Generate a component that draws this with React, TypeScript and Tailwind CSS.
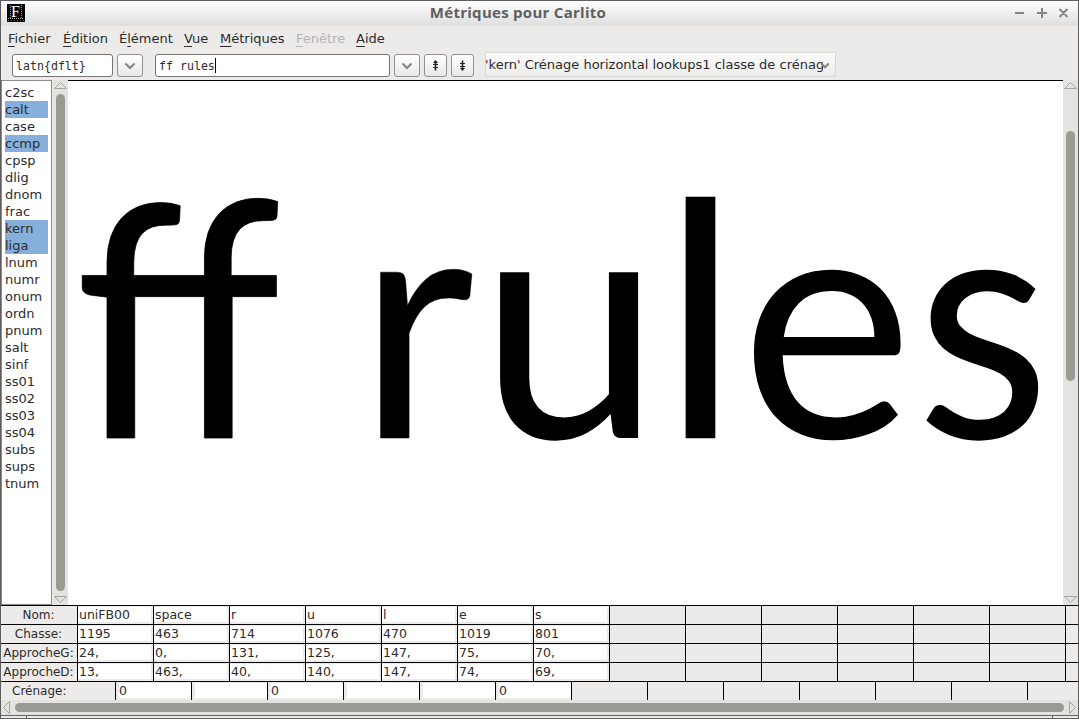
import React from "react";

const features = [
  "c2sc", "calt", "case", "ccmp", "cpsp", "dlig", "dnom", "frac", "kern", "liga", "lnum", "numr",
  "onum", "ordn", "pnum", "salt", "sinf", "ss01", "ss02", "ss03", "ss04", "subs", "sups", "tnum",
];
const selected = new Set(["calt", "ccmp", "kern", "liga"]);

const rows = [
  { label: "Nom:", values: ["uniFB00", "space", "r", "u", "l", "e", "s"] },
  { label: "Chasse:", values: ["1195", "463", "714", "1076", "470", "1019", "801"] },
  { label: "ApprocheG:", values: ["24,", "0,", "131,", "125,", "147,", "75,", "70,"] },
  { label: "ApprocheD:", values: ["13,", "463,", "40,", "140,", "147,", "74,", "69,"] },
];
const kerning = ["0", "", "0", "", "", "0"];

const menus = [
  { key: "F", rest: "ichier", width: "w-[55px]" },
  { key: "É", rest: "dition", width: "w-[56px]" },
  { pre: "É", key: "l", rest: "ément", width: "w-[65px]" },
  { key: "V", rest: "ue", width: "w-[36px]" },
  { key: "M", rest: "étriques", width: "w-[76px]" },
  { key: "F", rest: "enêtre", width: "w-[60px]", off: true },
  { key: "A", rest: "ide", width: "w-[40px]" },
];

const glyphs = [
  { text: "ff", box: "w-[203.4px] scale-x-[0.945] [-webkit-text-stroke:0.8px_black]" },
  { text: " ", box: "w-[79.4px]" },
  { text: "r", box: "w-[120.9px] scale-x-[0.976] [-webkit-text-stroke:0.5px_black]" },
  { text: "u", box: "w-[183.2px]" },
  { text: "l", box: "w-[78.5px] [-webkit-text-stroke:0.5px_black]" },
  { text: "e", box: "w-[175.3px]" },
  { text: "s", box: "w-[136px] scale-x-[0.947]" },
];

function Arrow({ dir }: { dir: "up" | "down" | "left" | "right" }) {
  const d = {
    up: "M1.5 8.5L7.5 2.5L13.5 8.5Z",
    down: "M1.5 1.5L7.5 7.5L13.5 1.5Z",
    left: "M8.5 1.5L2.5 7.5L8.5 13.5Z",
    right: "M1.5 1.5L7.5 7.5L1.5 13.5Z",
  }[dir];
  const vertical = dir === "up" || dir === "down";
  return (
    <svg width={vertical ? 15 : 10} height={vertical ? 10 : 15} className="block shrink-0" fill="none" stroke="#a5a6a0">
      <path d={d} />
    </svg>
  );
}

function Chevron({ small }: { small?: boolean }) {
  return (
    <svg width={small ? 10 : 12} height={small ? 7 : 8} viewBox="0 0 12 8" fill="none" stroke="#858680" strokeWidth={small ? 2.6 : 2}>
      <path d="M1.5 1.5L6 6L10.5 1.5" />
    </svg>
  );
}

function ToolButton({ children, className }: { children: React.ReactNode; className: string }) {
  return (
    <div className={`flex h-[23px] shrink-0 items-center justify-center rounded-[3px] border border-[#92938f] bg-gradient-to-b from-white to-[#e8e8e6] ${className}`}>
      {children}
    </div>
  );
}

function Step({ up }: { up?: boolean }) {
  return (
    <svg width="7" height="11" fill="none" stroke="#222" strokeWidth="1" className={up ? "" : "rotate-180"}>
      <path d="M3.5 1V10.5" strokeWidth="1.6" />
      <path d="M1 4.5H6M1 7.5H6" />
      <path d="M3.5 0L6 3H1Z" fill="#222" stroke="none" />
    </svg>
  );
}

export default function App() {
  return (
    <div className="flex h-[719px] w-[1079px] flex-col overflow-hidden border border-[#5f5e5f] bg-[#ecebe9] font-['DejaVu_Sans',sans-serif] text-[12.5px] text-[#2c2c2c]">
      <header className="flex h-[25px] shrink-0 items-center bg-gradient-to-b from-white to-[#dedede] pb-[2px] pl-[6px] pr-[7px]">
        <svg width="18" height="18" className="shrink-0">
          <rect width="18" height="18" fill="#000" />
          <path d="M3.5 1V14M14.5 1V14" stroke="#999" strokeDasharray="1 1" />
          <path d="M1 14.5H17" stroke="#aaa" strokeDasharray="1 1" />
          <path d="M1 16.5H17" stroke="#555" strokeDasharray="1 2" />
          <text x="4" y="12.5" fill="#fff" className="font-['Liberation_Serif',serif] text-[16px]">F</text>
        </svg>
        <h1 className="-ml-[4px] flex-1 text-center font-['Open_Sans',sans-serif] text-[15px] leading-[23px] font-bold tracking-[0.28px] text-[#606060]">
          Métriques pour Carlito
        </h1>
        <svg width="56" height="12" fill="none" stroke="#858585" strokeWidth="2">
          <path d="M0 6H9M22 6H32M27 1V11M44.5 2L52.5 10M52.5 2L44.5 10" />
        </svg>
      </header>

      <nav className="flex h-[25px] shrink-0 items-center pl-[7px] text-[13px] leading-[24px]">
        {menus.map((m, i) => (
          <span key={i} className={`shrink-0 whitespace-pre ${m.width} ${m.off ? "text-[#b5b4b2]" : ""}`}>
            {m.pre}
            <span className="underline decoration-1 underline-offset-[3px]">{m.key}</span>
            {m.rest}
          </span>
        ))}
      </nav>

      <div className="flex h-[29px] shrink-0 items-start pl-[11px]">
        <div className="mt-[3px] h-[23px] w-[101px] shrink-0 rounded-[3px] border border-[#747474] bg-white pl-[3px] font-['DejaVu_Sans_Mono',monospace] text-[11.6px] leading-[22px]">latn{"{dflt}"}</div>
        <ToolButton className="mt-[3px] ml-[4px] w-[26px]"><Chevron /></ToolButton>
        <div className="mt-[3px] ml-[12px] flex h-[23px] w-[235px] shrink-0 items-center rounded-[3px] border border-[#747474] bg-white pl-[3px] font-['DejaVu_Sans_Mono',monospace] text-[11.6px] leading-[21px]">
          <span className="pt-px">ff rules</span>
          <span className="h-[15px] w-px bg-black" />
        </div>
        <ToolButton className="mt-[3px] ml-[4px] w-[26px]"><Chevron /></ToolButton>
        <ToolButton className="mt-[3px] ml-[4px] w-[23px]"><Step up /></ToolButton>
        <ToolButton className="mt-[3px] ml-[4px] w-[23px]"><Step /></ToolButton>
        <div className="relative mt-px ml-[11px] h-[25px] w-[351px] shrink-0 border border-[#d9d9d7] bg-gradient-to-b from-[#fbfbfb] to-[#ececea]">
          <div className="-ml-px w-[338px] overflow-hidden text-[13px] leading-[23px] whitespace-pre">'kern' Crénage horizontal lookups1 classe de crénag</div>
          <div className="absolute top-[9px] right-[5px] flex"><Chevron small /></div>
        </div>
      </div>

      <main className="flex h-[525px] shrink-0">
        <div className="mr-px flex w-[51px] shrink-0 flex-col border border-[#8b8b8b] bg-white pt-[3px] pr-[3px] pl-[3px] text-[13px]">
          {features.map((f) => (
            <div key={f} className={`h-[17px] shrink-0 leading-[17px] ${selected.has(f) ? "bg-[#86afdc]" : ""}`}>{f}</div>
          ))}
        </div>
        <div className="flex w-[15px] shrink-0 flex-col items-center bg-[#e3e4e0]">
          <Arrow dir="up" />
          <div className="mt-[4px] mb-[4px] w-[9px] flex-1 rounded-full bg-[#999a94]" />
          <Arrow dir="down" />
        </div>
        <div className="flex h-[525px] w-[995px] shrink-0 overflow-hidden border-t border-black bg-white pl-[7px] font-['Lato',sans-serif] text-[327.3px] leading-[462px] text-black">
          {glyphs.map((g, i) => (
            <span key={i} className={`h-[462px] shrink-0 origin-left whitespace-pre ${g.box}`}>{g.text}</span>
          ))}
        </div>
        <div className="flex w-[15px] shrink-0 flex-col items-center bg-[#e3e4e0]">
          <Arrow dir="up" />
          <div className="mt-[41px] h-[250px] w-[9px] rounded-full bg-[#999a94]" />
          <div className="flex-1" />
          <Arrow dir="down" />
        </div>
      </main>

      <section className="shrink-0 text-[12.5px]">
        {rows.map((r) => (
          <div key={r.label} className="flex h-[19px] overflow-hidden border-t border-black">
            <div className="w-[76px] shrink-0 pr-px text-center text-[12px] leading-[18px] whitespace-pre">{r.label}</div>
            {Array.from({ length: 14 }, (_, i) => (
              <div key={i} className="w-[76px] shrink-0 border-l border-black py-px pr-[2px]">
                {r.values[i] && <div className="h-[15px] bg-white pl-px leading-[16px]">{r.values[i]}</div>}
              </div>
            ))}
          </div>
        ))}
        <div className="flex h-[19px] overflow-hidden border-t border-black">
          <div className="w-[114px] shrink-0 pl-[11px] text-[12px] leading-[18px]">Crénage:</div>
          {Array.from({ length: 13 }, (_, i) => (
            <div key={i} className="w-[76px] shrink-0 border-l border-black pt-px pl-[3px]">
              {i < kerning.length && <div className="h-[15px] bg-white leading-[16px]">{kerning[i]}</div>}
            </div>
          ))}
        </div>
      </section>

      <div className="flex h-[15px] shrink-0 items-center bg-[#e3e4e0]">
        <Arrow dir="left" />
        <div className="ml-[4px] h-[9px] w-[1049px] shrink-0 rounded-full bg-[#999a94]" />
        <div className="ml-[4px]"><Arrow dir="right" /></div>
      </div>
      <footer className="flex h-[3px] shrink-0 border-t border-[#666]">
        <div className="w-[26px] border-r border-[#666]" />
        <div className="w-[1026px] border-r border-[#666]" />
      </footer>
    </div>
  );
}
